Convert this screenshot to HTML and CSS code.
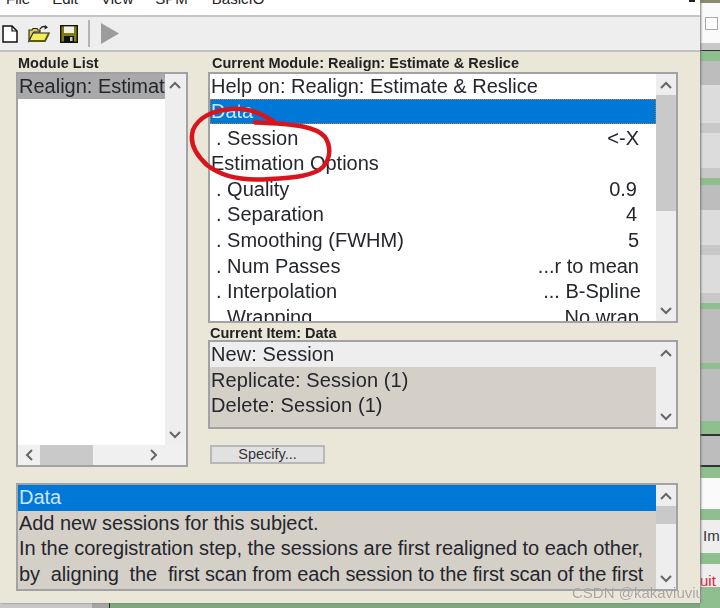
FILE: index.html
```html
<!DOCTYPE html>
<html lang="en">
<head>
<meta charset="utf-8">
<title>Batch Editor</title>
<link rel="stylesheet" href="styles.css">
</head>
<body>
<svg class="defs" width="0" height="0" aria-hidden="true">
  <symbol id="up" viewBox="0 0 12 8"><path d="M1 7L6 2l5 5" fill="none" stroke="#666" stroke-width="2"/></symbol>
  <symbol id="down" viewBox="0 0 12 8"><path d="M1 1l5 5 5-5" fill="none" stroke="#666" stroke-width="2"/></symbol>
  <symbol id="left" viewBox="0 0 8 12"><path d="M7 1L2 6l5 5" fill="none" stroke="#666" stroke-width="2"/></symbol>
  <symbol id="right" viewBox="0 0 8 12"><path d="M1 1l5 5-5 5" fill="none" stroke="#666" stroke-width="2"/></symbol>
</svg>
<div class="screen">
  <div class="main-col">
    <div class="window">
      <div class="menubar">
        <span class="menu m-file">File</span>
        <span class="menu m-edit">Edit</span>
        <span class="menu m-view">View</span>
        <span class="menu m-spm">SPM</span>
        <span class="menu m-basic">BasicIO</span>
        <span class="close-mark"></span>
      </div>
      <div class="toolbar">
        <svg class="ic-new" width="16" height="18" viewBox="0 0 16 18"><path d="M1 1h9l5 5v11H1z" fill="#fff" stroke="#111" stroke-width="1.5"/><path d="M10 1v5h5" fill="none" stroke="#111" stroke-width="1.2"/></svg>
        <svg class="ic-open" width="22" height="18" viewBox="0 0 22 18"><path d="M1 16V5h3l1-1.500h4l1 1.500h2v2H6z" fill="#d8d24a" stroke="#222" stroke-width="1.100"/><path d="M1 16l4-8h16l-4 8z" fill="#f2ee5a" stroke="#222" stroke-width="1.100"/><path d="M1 16h16l4-8" fill="none" stroke="#5c5a10" stroke-width="1.800"/><path d="M12 4c1.500-2.500 4-3 6-2" fill="none" stroke="#222" stroke-width="1.400"/><path d="M17 0l3 2.500-3.500 2z" fill="#222"/></svg>
        <svg class="ic-save" width="18" height="18" viewBox="0 0 18 18"><rect x=".7" y=".7" width="16.600" height="16.600" fill="#7e7e10" stroke="#111" stroke-width="1.400"/><rect x="4" y="1.500" width="10" height="6.500" fill="#f1f1e8"/><rect x="4" y="11" width="10" height="6" fill="#111"/><rect x="10" y="12" width="2.500" height="4" fill="#c8c8c8"/></svg>
        <span class="tool-sep"></span>
        <svg class="ic-run" width="18" height="21" viewBox="0 0 18 21"><path d="M0 0l18 10.500L0 21z" fill="#9c9c9c"/></svg>
      </div>
      <div class="content">
        <div class="columns">
          <section class="col-left">
            <h2 class="label">Module List</h2>
            <div class="box module-box">
              <div class="module-list"><div class="row row-grey">Realign: Estimate &amp; Reslice</div></div>
              <div class="vbar">
                <span class="arrow"><svg width="12" height="8"><use href="#up"/></svg></span>
                <span class="spacer"></span>
                <span class="arrow"><svg width="12" height="8"><use href="#down"/></svg></span>
              </div>
              <div class="hbar">
                <span class="arrow-h"><svg width="8" height="12"><use href="#left"/></svg></span>
                <span class="hthumb"></span>
                <span class="spacer"></span>
                <span class="arrow-h"><svg width="8" height="12"><use href="#right"/></svg></span>
              </div>
            </div>
          </section>
          <section class="col-right">
            <h2 class="label">Current Module: Realign: Estimate &amp; Reslice</h2>
            <div class="box list-box">
              <div class="rows">
                <div class="row">Help on: Realign: Estimate &amp; Reslice</div>
                <div class="row row-sel">Data</div>
                <div class="row sub"><span>. Session</span><span>&lt;-X</span></div>
                <div class="row">Estimation Options</div>
                <div class="row sub"><span>. Quality</span><span class="v-a">0.9</span></div>
                <div class="row sub"><span>. Separation</span><span class="v-a">4</span></div>
                <div class="row sub"><span>. Smoothing (FWHM)</span><span>5</span></div>
                <div class="row sub"><span>. Num Passes</span><span>...r to mean</span></div>
                <div class="row sub"><span>. Interpolation</span><span class="v-b">... B-Spline</span></div>
                <div class="row sub"><span>. Wrapping</span><span>No wrap</span></div>
              </div>
              <div class="vbar">
                <span class="arrow"><svg width="12" height="8"><use href="#up"/></svg></span>
                <span class="thumb thumb-list"></span>
                <span class="spacer"></span>
                <span class="arrow"><svg width="12" height="8"><use href="#down"/></svg></span>
              </div>
            </div>
            <h2 class="label label-item">Current Item: Data</h2>
            <div class="box item-box">
              <div class="rows rows-grey rows-wide">
                <div class="row row-light">New: Session</div>
                <div class="row">Replicate: Session (1)</div>
                <div class="row">Delete: Session (1)</div>
              </div>
              <div class="vbar">
                <span class="arrow"><svg width="12" height="8"><use href="#up"/></svg></span>
                <span class="spacer"></span>
                <span class="arrow"><svg width="12" height="8"><use href="#down"/></svg></span>
              </div>
            </div>
            <button class="specify" type="button">Specify...</button>
          </section>
        </div>
        <div class="box help-box">
          <div class="rows rows-grey rows-help">
            <div class="row row-blue">Data</div>
            <div class="row">Add new sessions for this subject.</div>
            <div class="row">In the coregistration step, the sessions are first realigned to each other,</div>
            <div class="row row-tight">by&nbsp; aligning&nbsp; the&nbsp; first scan from each session to the first scan of the first</div>
          </div>
          <div class="vbar">
            <span class="arrow"><svg width="12" height="8"><use href="#up"/></svg></span>
            <span class="thumb thumb-help"></span>
            <span class="spacer"></span>
            <span class="arrow"><svg width="12" height="8"><use href="#down"/></svg></span>
          </div>
        </div>
      </div>
    </div>
    <div class="under">
      <span class="u-a"></span>
      <span class="u-b"></span>
      <span class="u-c"></span>
    </div>
  </div>
  <aside class="strip">
    <div class="s-top"></div>
    <div class="s-white"><span class="s-check"></span></div>
    <div class="s-grey h7"></div>
    <div class="s-line"></div>
    <div class="s-green h10"></div>
    <div class="s-mid h24"></div>
    <div class="s-lite h38"></div>
    <div class="s-grey h10"></div>
    <div class="s-lite h35"></div>
    <div class="s-grey h10"></div>
    <div class="s-green h7"></div>
    <div class="s-mid h25"></div>
    <div class="s-lite h35"></div>
    <div class="s-grey h10"></div>
    <div class="s-lite h38"></div>
    <div class="s-grey h10"></div>
    <div class="s-green h6"></div>
    <div class="s-mid h54"></div>
    <div class="s-green h6"></div>
    <div class="s-mid h52"></div>
    <div class="s-green h13"></div>
    <div class="s-line2"></div>
    <div class="s-mid h29"></div>
    <div class="s-line2"></div>
    <div class="s-green h11"></div>
    <div class="s-white h31"></div>
    <div class="s-green h11"></div>
    <div class="s-text h33 s-im">Im</div>
    <div class="s-green h11"></div>
    <div class="s-text h23 s-quit">uit</div>
    <div class="s-green fill"></div>
  </aside>
  <svg class="scribble" width="720" height="608" viewBox="0 0 720 608" aria-hidden="true">
    <path d="M274 122C262 113 248 108 232 109C212 110 198 118 193 130C189 143 196 155 207 165C222 177 245 181 270 179C292 178 314 176 323 167C331 158 331 146 325 137C316 127 298 124 255 122.500" fill="none" stroke="#d9141c" stroke-width="4.500" stroke-linecap="round"/>
  </svg>
  <div class="watermark">CSDN @kakaviuviu</div>
</div>
</body>
</html>
```

FILE: styles.css
```css
* { box-sizing: border-box; }
html, body { margin: 0; padding: 0; overflow: hidden; }
body { width: 720px; height: 608px; background: #7fa87f; font-family: "Liberation Sans", Arial, sans-serif; }
.defs { position: absolute; }
.screen { position: relative; display: flex; width: 720px; height: 608px; overflow: hidden; filter: blur(0.45px); }
.main-col { width: 700px; flex: none; display: flex; flex-direction: column; }
.window { height: 603px; display: flex; flex-direction: column; background: #ebe7d8; box-shadow: 1px 0 2px #777; position: relative; z-index: 1; }

.menubar { height: 17px; flex: none; background: #fff; border-bottom: 2px solid #c4c4c4; position: relative; display: flex; align-items: flex-end; overflow: hidden; font-size: 15px; line-height: 18px; color: #222; padding-bottom: 7px; }
.menu { flex: none; }
.m-file { margin-left: 6px; }
.m-edit { margin-left: 22px; }
.m-view { margin-left: 23px; }
.m-spm { margin-left: 22px; }
.m-basic { margin-left: 24px; }
.close-mark { position: absolute; right: 5px; top: 0; width: 6px; height: 2px; background: #222; }

.toolbar { height: 35px; flex: none; background: #eee; border-bottom: 2px solid #c0c0c0; display: flex; align-items: center; padding-left: 2px; }
.ic-new, .ic-open, .ic-save, .ic-run { flex: none; }
.ic-open { margin-left: 10px; }
.ic-save { margin-left: 10px; }
.tool-sep { width: 1.500px; height: 27px; background: #b4b4b4; margin-left: 10px; flex: none; }
.ic-run { margin-left: 11px; }

.content { flex: 1; padding: 4px 22px 0 16px; display: flex; flex-direction: column; }
.columns { display: flex; gap: 20px; }
.col-left { width: 172px; flex: none; display: flex; flex-direction: column; }
.col-right { width: 470px; flex: none; display: flex; flex-direction: column; }
.label { margin: 0 0 0 2px; height: 16px; font-size: 14.500px; line-height: 15px; font-weight: bold; color: #222; white-space: nowrap; }
.col-right .label { margin-left: 4px; }
.col-right .label-item { margin: 4px 0 0 2px; height: 13px; line-height: 13px; }

.box { border: 2px solid #a0a2a6; display: flex; overflow: hidden; font-size: 20px; color: #24262e; }
.module-box { height: 395px; display: grid; grid-template-columns: 1fr 21px; grid-template-rows: 1fr 20px; background: #f0f0f0; }
.module-list { background: #fff; overflow: hidden; }
.list-box { height: 251px; }
.item-box { height: 89px; }
.help-box { height: 108px; width: 662px; margin-top: 16px; }

.rows { flex: 1; min-width: 0; background: #fff; overflow: hidden; }
.rows-grey { background: #d4d0c8; }
.rows-wide { letter-spacing: 0.08px; }
.rows-help { letter-spacing: -0.055px; }
.row { height: 25.600px; line-height: 25.600px; padding-left: 1px; white-space: nowrap; display: flex; justify-content: space-between; padding-right: 17px; }
.module-list .row { display: block; overflow: hidden; padding-right: 0; height: 24.500px; }
.sub { padding-left: 6px; }
.row-grey { background: #a9a9a9; }
.row-sel { background: #0078d7; color: #cfe4fa; outline: 1px dotted #c9772f; outline-offset: -1px; margin-top: -1px; }
.row-sel + .row { margin-top: 1.400px; }
.row-blue { background: #0078d7; color: #cfe4fa; }
.row-light { background: #eee; height: 24.500px; margin-bottom: 1px; }
.row-tight { letter-spacing: -0.12px; }
.v-a { margin-right: 2px; }
.v-b { margin-right: -2px; }

.vbar { width: 20px; flex: none; background: #eee; display: flex; flex-direction: column; }
.arrow { height: 21px; flex: none; display: flex; align-items: center; justify-content: center; }
.spacer { flex: 1; }
.thumb { flex: none; background: #c9c9c9; }
.thumb-list { height: 116px; }
.thumb-help { height: 18px; }
.hbar { grid-column: 1; display: flex; background: #f0f0f0; align-items: stretch; }
.arrow-h { width: 22px; flex: none; display: flex; align-items: center; justify-content: center; }
.hthumb { width: 53px; flex: none; background: #c9c9c9; }

.specify { width: 115px; height: 19px; margin: 16px 0 0 2px; padding: 0; background: #e1e1e1; border: 2px solid #b8b8b8; font: 14.500px/15px "Liberation Sans", Arial, sans-serif; color: #333; }

.under { height: 5px; flex: none; display: flex; }
.u-a { width: 92px; background: #c8c8c8; }
.u-b { width: 18px; background: #a6a6a6; border-right: 1px solid #222; }
.u-c { flex: 1; background: #7fa87f; }

.strip { width: 20px; flex: none; display: flex; flex-direction: column; height: 608px; background: #8fbc8f; font-size: 15px; overflow: hidden; }
.s-top { height: 3px; flex: none; background: #8a8a70; }
.s-white { height: 40px; flex: none; background: #fafafa; padding: 14px 0 0 5px; }
.s-check { display: block; width: 13px; height: 13px; background: #fff; border: 1px solid #aaa; }
.s-grey { background: #c8c8c8; flex: none; }
.s-line { height: 1px; background: #333; flex: none; }
.s-line2 { height: 2px; background: #333; flex: none; }
.s-green { background: #8fbf8f; flex: none; }
.s-mid { background: #bdbdbd; flex: none; }
.s-lite { background: #dcdcdc; flex: none; }
.s-text { background: #eee; flex: none; white-space: nowrap; overflow: hidden; padding-left: 3px; }
.s-im { color: #333; line-height: 32px; font-size: 15px; }
.s-quit { color: #e8203a; padding-left: 0; line-height: 34px; font-size: 15px; }
.s-white.h31 { padding: 0; }
.h6 { height: 6px; } .h7 { height: 7px; } .h10 { height: 10px; } .h11 { height: 11px; } .h13 { height: 13px; }
.h23 { height: 23px; } .h24 { height: 24px; } .h25 { height: 25px; } .h29 { height: 29px; } .h31 { height: 31px; }
.h33 { height: 33px; } .h35 { height: 35px; } .h38 { height: 38px; } .h52 { height: 52px; } .h54 { height: 54px; }
.fill { flex: 1; }

.scribble { position: absolute; left: 0; top: 0; z-index: 2; pointer-events: none; }
.watermark { position: absolute; left: 572px; top: 584px; z-index: 3; font-size: 15px; line-height: 17px; color: rgba(120,120,120,.65); text-shadow: 0 0 1px rgba(255,255,255,.8); white-space: nowrap; }
```
